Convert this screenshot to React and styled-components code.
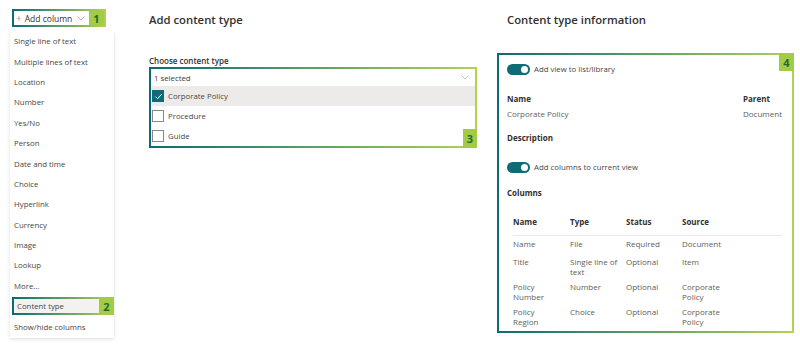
import React from "react";
import styled, { createGlobalStyle, css } from "styled-components";

const TEAL = "#0f6b75";
const LIME = "#a4cb45";

const GlobalStyle = createGlobalStyle`
  body {
    margin: 0;
    background: #fff;
    font-family: "Open Sans", "Noto Sans", sans-serif;
    color: #323130;
  }
`;

const gradientBorder = css`
  border: 2px solid transparent;
  background: linear-gradient(${(p) => p.$fill || "#fff"}, ${(p) => p.$fill || "#fff"}) padding-box,
    linear-gradient(90deg, #0c6a76, #b0d353) border-box;
`;

const Page = styled.div`
  display: flex;
  align-items: flex-start;
  width: 800px;
  height: 351px;
  padding: 9px 0 0 10px;
  box-sizing: border-box;
  overflow: hidden;
`;

const Badge = styled.span`
  display: flex;
  align-items: center;
  justify-content: center;
  width: 15px;
  background: ${LIME};
  color: #1e6b30;
  font-weight: 700;
  font-size: 11px;
  line-height: 1;

  ${(p) =>
    p.$corner === "top" &&
    css`
      position: absolute;
      top: -2px;
      right: -2px;
      height: 18px;
    `}
  ${(p) =>
    p.$corner === "bottom" &&
    css`
      position: absolute;
      bottom: -2px;
      right: -2px;
      width: 14px;
      height: 19px;
    `}
  ${(p) =>
    p.$corner === "side" &&
    css`
      position: absolute;
      top: -2px;
      bottom: -2px;
      right: -2px;
    `}
  ${(p) =>
    p.$corner === "inline" &&
    css`
      align-self: stretch;
      margin-left: auto;
    `}
`;

/* left: add column menu */

const LeftCol = styled.div`
  width: 104px;
  display: flex;
  flex-direction: column;
`;

const AddColumnBar = styled.div`
  ${gradientBorder};
  margin-left: 2px;
  width: 94px;
  height: 18px;
  box-sizing: border-box;
  display: flex;
  align-items: center;
  font-size: 8.5px;
  color: #323130;
`;

const Plus = styled.span`
  color: #a19f9d;
  font-size: 10px;
  margin: 0 3px 0 2px;
  line-height: 1;
`;

const Chevron = styled.svg`
  width: 8px;
  height: 5px;
  margin-left: ${(p) => p.$gap || "5px"};
  flex-shrink: 0;
`;

const Menu = styled.div`
  margin-top: 3px;
  width: 104px;
  padding: 1px 0;
  background: #fff;
  box-shadow: 0 1.6px 3.6px rgba(0, 0, 0, 0.13), 0 0.3px 0.9px rgba(0, 0, 0, 0.11);
`;

const MenuItem = styled.div`
  position: relative;
  height: 20.4px;
  display: flex;
  align-items: center;
  padding-left: 4px;
  font-size: 7.8px;
  color: #484644;
  box-sizing: border-box;

  ${(p) =>
    p.$highlighted &&
    css`
      ${gradientBorder};
      height: 18.4px;
      margin: 1px 0 1px 2px;
      padding-left: 3px;
    `}
`;

/* middle: add content type */

const MiddleCol = styled.div`
  margin-left: 35px;
  width: 328px;
  display: flex;
  flex-direction: column;
`;

const Heading = styled.h2`
  margin: 3px 0 0;
  font-size: 11.3px;
  line-height: 16px;
  font-weight: 600;
  color: #323130;
  padding-left: ${(p) => p.$indent || "0"};
`;

const FieldLabel = styled.div`
  margin-top: 27px;
  font-size: 8px;
  line-height: 12px;
  font-weight: 600;
`;

const ChoiceBox = styled.div`
  ${gradientBorder};
  position: relative;
  box-sizing: border-box;
  height: 81px;
  display: flex;
  flex-direction: column;
`;

const SelectRow = styled.div`
  height: 17px;
  display: flex;
  align-items: center;
  justify-content: space-between;
  padding: 0 6px 0 3px;
  font-size: 7.8px;
  color: #3b3a39;
`;

const OptionRow = styled.div`
  height: 20px;
  display: flex;
  align-items: center;
  gap: 4px;
  padding-left: 1px;
  font-size: 7.8px;
  color: #484644;
  background: ${(p) => (p.$checked ? "#edebe9" : "transparent")};
`;

const Box = styled.span`
  width: 12px;
  height: 12px;
  box-sizing: border-box;
  border: 1px solid ${(p) => (p.$checked ? TEAL : "#8a8886")};
  background: ${(p) => (p.$checked ? TEAL : "#fff")};
  display: flex;
  align-items: center;
  justify-content: center;
`;

/* right: content type information */

const RightCol = styled.div`
  margin-left: 20px;
  width: 297px;
  display: flex;
  flex-direction: column;
`;

const InfoBox = styled.div`
  ${gradientBorder};
  position: relative;
  margin-top: 25px;
  height: 280px;
  box-sizing: border-box;
  padding: 8px 10px 0 8px;
  display: flex;
  flex-direction: column;
`;

const ToggleRow = styled.div`
  display: flex;
  align-items: center;
  gap: 4px;
  height: 12px;
  margin-top: ${(p) => p.$top || "0"};
  font-size: 7.8px;
  color: #484644;
`;

const Toggle = styled.span`
  position: relative;
  width: 23px;
  height: 11px;
  border-radius: 6px;
  background: ${TEAL};

  &::after {
    content: "";
    position: absolute;
    right: 2.5px;
    top: 2px;
    width: 7px;
    height: 7px;
    border-radius: 50%;
    background: #fff;
  }
`;

const FieldsRow = styled.div`
  display: flex;
  justify-content: space-between;
  margin-top: 18px;
`;

const Field = styled.div`
  display: flex;
  flex-direction: column;
  gap: 3px;
`;

const Strong = styled.div`
  font-size: 8px;
  line-height: 12px;
  font-weight: 700;
  color: #323130;
  margin-top: ${(p) => p.$top || "0"};
`;

const Value = styled.div`
  font-size: 8px;
  line-height: 12px;
  color: #605e5c;
`;

const Table = styled.div`
  margin: 17px 0 0 6px;
  display: grid;
  grid-template-columns: 57px 56px 56px 56px 1fr;
`;

const HeadCell = styled.div`
  font-size: 8px;
  line-height: 12px;
  font-weight: 700;
  color: #323130;
  padding-bottom: 7px;
  border-bottom: 1px solid #edebe9;
`;

const Cell = styled.div`
  font-size: 8px;
  line-height: 9.5px;
  color: #605e5c;
  padding: 3px 8px 3px 0;
  min-height: 12px;
`;

const ChevronIcon = ({ gap, color = "#a19f9d" }) => (
  <Chevron viewBox="0 0 8 5" $gap={gap}>
    <path d="M0.5 0.5 L4 4 L7.5 0.5" fill="none" stroke={color} strokeWidth="0.8" />
  </Chevron>
);

const menuItems = [
  "Single line of text",
  "Multiple lines of text",
  "Location",
  "Number",
  "Yes/No",
  "Person",
  "Date and time",
  "Choice",
  "Hyperlink",
  "Currency",
  "Image",
  "Lookup",
  "More...",
  "Content type",
  "Show/hide columns",
];

const options = [
  { label: "Corporate Policy", checked: true },
  { label: "Procedure", checked: false },
  { label: "Guide", checked: false },
];

const columns = [
  ["Name", "File", "Required", "Document"],
  ["Title", "Single line of text", "Optional", "Item"],
  ["Policy Number", "Number", "Optional", "Corporate Policy"],
  ["Policy Region", "Choice", "Optional", "Corporate Policy"],
];

export default function App() {
  return (
    <>
      <GlobalStyle />
      <Page>
        <LeftCol>
          <AddColumnBar>
            <Plus>+</Plus>
            Add column
            <ChevronIcon gap="5px" />
            <Badge $corner="inline">1</Badge>
          </AddColumnBar>
          <Menu>
            {menuItems.map((item) =>
              item === "Content type" ? (
                <MenuItem key={item} $highlighted $fill="#f3f2f1">
                  {item}
                  <Badge $corner="side">2</Badge>
                </MenuItem>
              ) : (
                <MenuItem key={item}>{item}</MenuItem>
              )
            )}
          </Menu>
        </LeftCol>

        <MiddleCol>
          <Heading>Add content type</Heading>
          <FieldLabel>Choose content type</FieldLabel>
          <ChoiceBox>
            <SelectRow>
              1 selected
              <ChevronIcon gap="0" color="#b3b0ad" />
            </SelectRow>
            {options.map((o) => (
              <OptionRow key={o.label} $checked={o.checked}>
                <Box $checked={o.checked}>
                  {o.checked && (
                    <svg width="9" height="9" viewBox="0 0 9 9">
                      <path d="M1.5 4.6 L3.6 6.7 L7.6 2.2" fill="none" stroke="#fff" strokeWidth="1" />
                    </svg>
                  )}
                </Box>
                {o.label}
              </OptionRow>
            ))}
            <Badge $corner="bottom">3</Badge>
          </ChoiceBox>
        </MiddleCol>

        <RightCol>
          <Heading $indent="10px">Content type information</Heading>
          <InfoBox>
            <Badge $corner="top">4</Badge>
            <ToggleRow>
              <Toggle />
              Add view to list/library
            </ToggleRow>
            <FieldsRow>
              <Field>
                <Strong>Name</Strong>
                <Value>Corporate Policy</Value>
              </Field>
              <Field>
                <Strong>Parent</Strong>
                <Value>Document</Value>
              </Field>
            </FieldsRow>
            <Strong $top="12px">Description</Strong>
            <ToggleRow $top="17px">
              <Toggle />
              Add columns to current view
            </ToggleRow>
            <Strong $top="14px">Columns</Strong>
            <Table>
              {["Name", "Type", "Status", "Source", ""].map((h, i) => (
                <HeadCell key={i}>{h}</HeadCell>
              ))}
              {columns.map((row) => (
                <React.Fragment key={row[0]}>
                  {row.map((c, i) => (
                    <Cell key={i}>{c}</Cell>
                  ))}
                  <Cell />
                </React.Fragment>
              ))}
            </Table>
          </InfoBox>
        </RightCol>
      </Page>
    </>
  );
}
